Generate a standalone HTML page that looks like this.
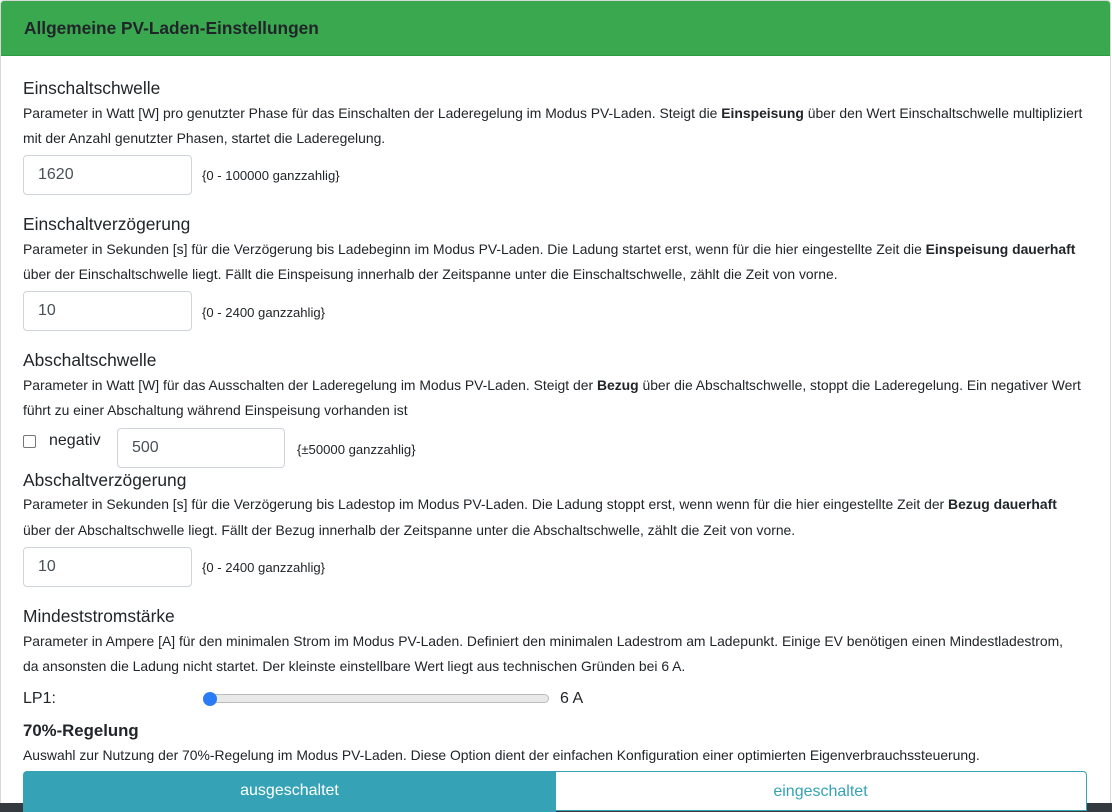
<!DOCTYPE html>
<html><head><meta charset="utf-8"><style>
*{box-sizing:border-box;margin:0;padding:0}
body{width:1112px;height:812px;overflow:hidden;background:#fff;font-family:"Liberation Sans",sans-serif;color:#212529;position:relative}
.card{position:absolute;left:0;top:0;width:1111px;height:812px;border:1px solid #d8d8d8;border-radius:4px;overflow:hidden}
.hdr{position:absolute;left:0;top:0;width:1111px;height:55px;background:#3aa84f;border-bottom:1px solid #2f9a44}
.hdr span{position:absolute;left:23px;top:17px;font-size:17.3px;font-weight:bold;color:#212529}
.a{position:absolute;white-space:nowrap}
h{position:absolute;font-size:17.4px;left:23px;white-space:nowrap;line-height:20px}
p{position:absolute;left:23px;font-size:13.9px;white-space:nowrap;line-height:16px}
.in{position:absolute;height:40px;border:1px solid #ced4da;border-radius:4px;font-size:16px;color:#495057;padding:10px 0 0 14px}
.hint{position:absolute;font-size:13.1px;line-height:16px;white-space:nowrap}
.bar{position:absolute;left:0;top:803px;width:1112px;height:9px;background:#343a40}
</style></head><body>
<div class="card">
<div class="hdr"><span>Allgemeine PV-Laden-Einstellungen</span></div>
</div>
<h style="top:78px">Einschaltschwelle</h>
<p style="top:105px">Parameter in Watt [W] pro genutzter Phase für das Einschalten der Laderegelung im Modus PV-Laden. Steigt die <b>Einspeisung</b> über den Wert Einschaltschwelle multipliziert</p>
<p style="top:130px">mit der Anzahl genutzter Phasen, startet die Laderegelung.</p>
<div class="in" style="left:23px;top:155px;width:169px">1620</div>
<div class="hint" style="left:202px;top:168px">{0 - 100000 ganzzahlig}</div>

<h style="top:214px">Einschaltverzögerung</h>
<p style="top:241px">Parameter in Sekunden [s] für die Verzögerung bis Ladebeginn im Modus PV-Laden. Die Ladung startet erst, wenn für die hier eingestellte Zeit die <b>Einspeisung dauerhaft</b></p>
<p style="top:266px">über der Einschaltschwelle liegt. Fällt die Einspeisung innerhalb der Zeitspanne unter die Einschaltschwelle, zählt die Zeit von vorne.</p>
<div class="in" style="left:23px;top:291px;width:169px">10</div>
<div class="hint" style="left:202px;top:305px">{0 - 2400 ganzzahlig}</div>

<h style="top:350px">Abschaltschwelle</h>
<p style="top:377px">Parameter in Watt [W] für das Ausschalten der Laderegelung im Modus PV-Laden. Steigt der <b>Bezug</b> über die Abschaltschwelle, stoppt die Laderegelung. Ein negativer Wert</p>
<p style="top:402px">führt zu einer Abschaltung während Einspeisung vorhanden ist</p>
<div class="a" style="left:23px;top:435px;width:13px;height:13px;border:1px solid #767676;border-radius:2px"></div>
<div class="a" style="left:49px;top:432px;font-size:16px">negativ</div>
<div class="in" style="left:117px;top:428px;width:168px">500</div>
<div class="hint" style="left:297px;top:442px">{±50000 ganzzahlig}</div>

<h style="top:470px">Abschaltverzögerung</h>
<p style="top:496px">Parameter in Sekunden [s] für die Verzögerung bis Ladestop im Modus PV-Laden. Die Ladung stoppt erst, wenn wenn für die hier eingestellte Zeit der <b>Bezug dauerhaft</b></p>
<p style="top:522px">über der Abschaltschwelle liegt. Fällt der Bezug innerhalb der Zeitspanne unter die Abschaltschwelle, zählt die Zeit von vorne.</p>
<div class="in" style="left:23px;top:547px;width:169px">10</div>
<div class="hint" style="left:202px;top:560px">{0 - 2400 ganzzahlig}</div>

<h style="top:606px">Mindeststromstärke</h>
<p style="top:633px">Parameter in Ampere [A] für den minimalen Strom im Modus PV-Laden. Definiert den minimalen Ladestrom am Ladepunkt. Einige EV benötigen einen Mindestladestrom,</p>
<p style="top:658px">da ansonsten die Ladung nicht startet. Der kleinste einstellbare Wert liegt aus technischen Gründen bei 6 A.</p>
<div class="a" style="left:23px;top:690px;font-size:16px">LP1:</div>
<div class="a" style="left:203px;top:694px;width:346px;height:9px;background:#e9e9e9;border:1px solid #bbb;border-radius:5px"></div>
<div class="a" style="left:203px;top:692px;width:14px;height:14px;background:#2a7cf6;border-radius:50%"></div>
<div class="a" style="left:560px;top:690px;font-size:16px">6 A</div>

<h style="top:721px;font-weight:bold;font-size:16.8px">70%-Regelung</h>
<p style="top:747px">Auswahl zur Nutzung der 70%-Regelung im Modus PV-Laden. Diese Option dient der einfachen Konfiguration einer optimierten Eigenverbrauchssteuerung.</p>
<div class="bar"></div>
<div class="a" style="left:555px;top:771px;width:532px;height:40px;border:1px solid #35a2b6;border-left:none;border-radius:0 4px 0 0;background:#fff;color:#35a2b6;font-size:16px;text-align:center;padding-top:11px">eingeschaltet</div>
<div class="a" style="left:23px;top:771px;width:533px;height:41px;background:#35a2b6;border-radius:4px 0 0 0;color:#fff;font-size:16px;text-align:center;padding-top:11px">ausgeschaltet</div>
</body></html>
